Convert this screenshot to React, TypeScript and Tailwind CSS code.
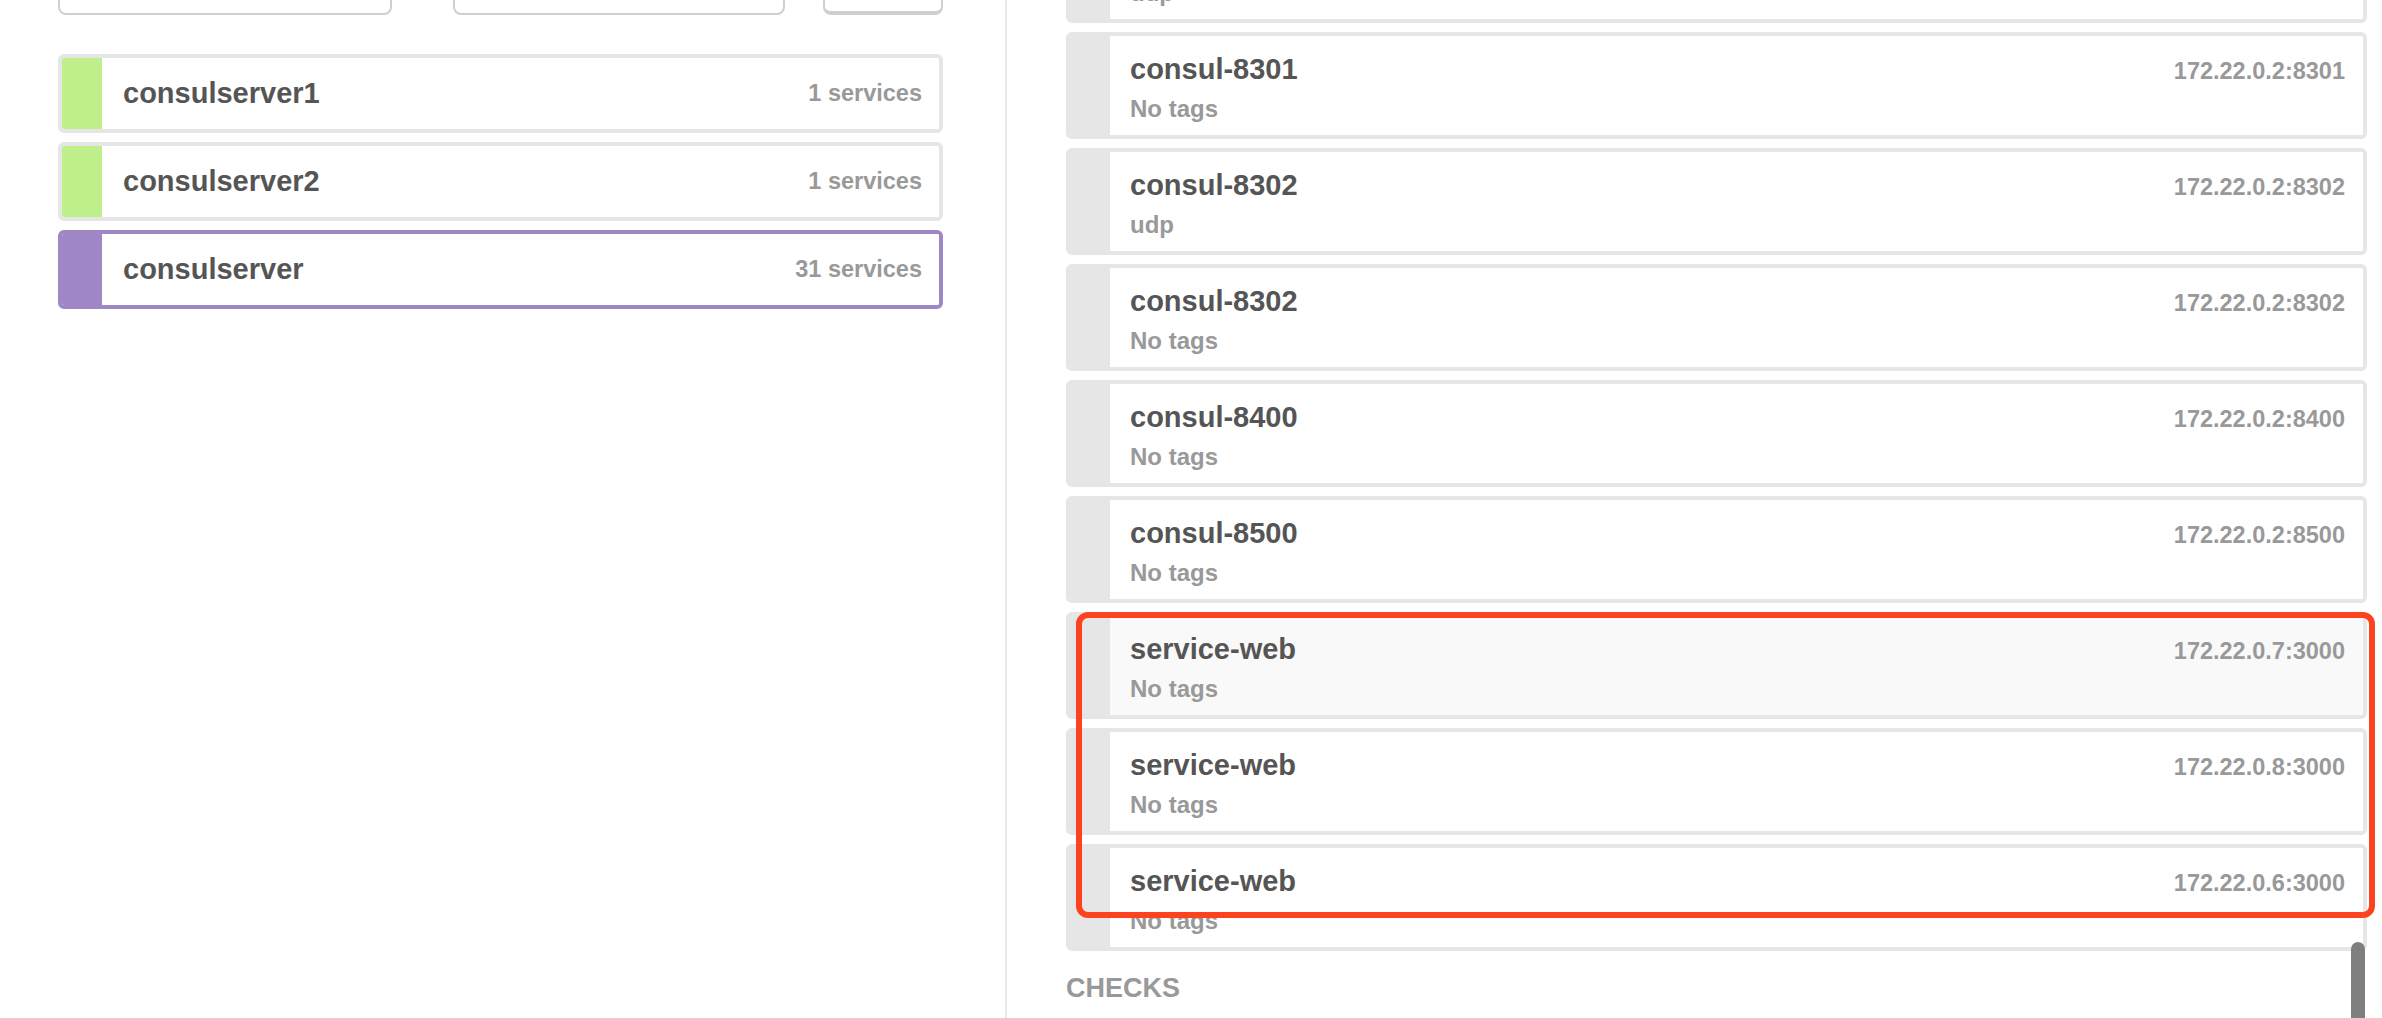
import React from "react"

type Service = { name: string; tags: string; addr: string; hover?: boolean }

const services: Service[] = [
  { name: "consul-8301", tags: "udp", addr: "172.22.0.2:8301" },
  { name: "consul-8301", tags: "No tags", addr: "172.22.0.2:8301" },
  { name: "consul-8302", tags: "udp", addr: "172.22.0.2:8302" },
  { name: "consul-8302", tags: "No tags", addr: "172.22.0.2:8302" },
  { name: "consul-8400", tags: "No tags", addr: "172.22.0.2:8400" },
  { name: "consul-8500", tags: "No tags", addr: "172.22.0.2:8500" },
  { name: "service-web", tags: "No tags", addr: "172.22.0.7:3000", hover: true },
  { name: "service-web", tags: "No tags", addr: "172.22.0.8:3000" },
  { name: "service-web", tags: "No tags", addr: "172.22.0.6:3000" },
]

const nodes = [
  { name: "consulserver1", count: "1 services", active: false },
  { name: "consulserver2", count: "1 services", active: false },
  { name: "consulserver", count: "31 services", active: true },
]

function NodeCard({ name, count, active }: { name: string; count: string; active: boolean }) {
  return (
    <div
      className={
        "flex h-[79px] mb-[9px] rounded-[6px] border-4 overflow-hidden " +
        (active ? "border-[#9e87c4]" : "border-[#e6e6e6]")
      }
    >
      <div className={"w-[40px] shrink-0 " + (active ? "bg-[#9e87c4]" : "bg-[#bfef8a]")} />
      <div className="flex flex-1 items-center justify-between pl-[21px] pr-[17px] bg-white">
        <span className="text-[29px] font-bold text-[#555]">{name}</span>
        <span className="text-[23.5px] font-bold text-[#999]">{count}</span>
      </div>
    </div>
  )
}

function ServiceCard({ s }: { s: Service }) {
  return (
    <div className="flex h-[107px] mb-[9px] rounded-[6px] border-4 border-[#e6e6e6] overflow-hidden">
      <div className="w-[40px] shrink-0 bg-[#e6e6e6]" />
      <div className={"flex-1 pl-[20px] pr-[18px] pt-[15px] " + (s.hover ? "bg-[#f9f9f9]" : "bg-white")}>
        <div className="flex items-baseline justify-between">
          <span className="text-[29px] leading-[36px] font-bold text-[#555]">{s.name}</span>
          <span className="text-[23.5px] leading-[36px] font-bold text-[#999]">{s.addr}</span>
        </div>
        <div className="mt-[5px] text-[24px] leading-[30px] font-bold text-[#999]">{s.tags}</div>
      </div>
    </div>
  )
}

export default function App() {
  return (
    <div className="relative flex h-[1018px] w-full overflow-hidden bg-white font-['Liberation_Sans',Arial,sans-serif]">
      {/* nodes */}
      <div className="w-[1005px] shrink-0 pl-[58px] pr-[62px]">
        <div className="flex -mt-[45px] h-[60px]">
          <div className="w-[334px] rounded-[8px] border-2 border-[#cfcfcf]" />
          <div className="ml-[61px] w-[332px] rounded-[8px] border-2 border-[#cfcfcf]" />
          <div className="ml-[38px] w-[120px] rounded-[8px] border-2 border-b-4 border-[#cfcfcf]" />
        </div>
        <div className="mt-[39px]">
          {nodes.map((n) => (
            <NodeCard key={n.name} {...n} />
          ))}
        </div>
      </div>

      {/* services */}
      <div className="flex-1 border-l-2 border-[#e8e8e8] pl-[59px] pr-[15px]">
        <div className="-mt-[84px]">
          {services.map((s, i) => (
            <ServiceCard key={i} s={s} />
          ))}
        </div>
        <div className="mt-[21px] text-[27px] leading-[32px] font-bold text-[#999]">CHECKS</div>
      </div>

      {/* annotation */}
      <div className="absolute left-[1076px] top-[612px] w-[1299px] h-[306px] rounded-[12px] border-[6px] border-[#fd4220]" />
      {/* scrollbar */}
      <div className="absolute left-[2351px] top-[942px] w-[14px] h-[100px] rounded-full bg-[#7f7f7f]" />
    </div>
  )
}
